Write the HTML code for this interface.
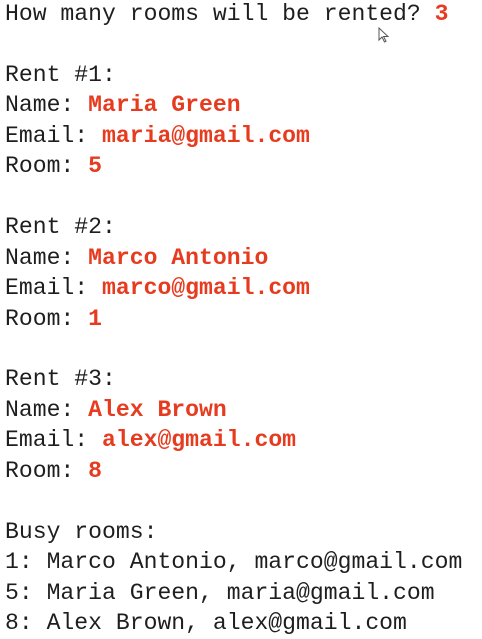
<!DOCTYPE html>
<html><head><meta charset="utf-8"><style>
html,body{margin:0;padding:0;background:#fff;width:482px;height:637px;overflow:hidden}
pre{margin:0;position:absolute;left:5px;top:-1px;font-family:"Liberation Mono",monospace;font-size:23.1px;line-height:30.45px;color:#1e1e1e}
b{color:#e63b1f;font-weight:bold}
svg{position:absolute;left:378px;top:27px}
</style></head><body>
<pre>How many rooms will be rented? <b>3</b>

Rent #1:
Name: <b>Maria Green</b>
Email: <b>maria@gmail.com</b>
Room: <b>5</b>

Rent #2:
Name: <b>Marco Antonio</b>
Email: <b>marco@gmail.com</b>
Room: <b>1</b>

Rent #3:
Name: <b>Alex Brown</b>
Email: <b>alex@gmail.com</b>
Room: <b>8</b>

Busy rooms:
1: Marco Antonio, marco@gmail.com
5: Maria Green, maria@gmail.com
8: Alex Brown, alex@gmail.com</pre>
<svg width="12" height="18" viewBox="0 0 12 18"><path d="M1 1 L1 13 L4 10 L6.5 15 L8 14.3 L5.6 9.5 L10 9.5 Z" fill="#fff" stroke="#555" stroke-width="1"/></svg>
</body></html>
